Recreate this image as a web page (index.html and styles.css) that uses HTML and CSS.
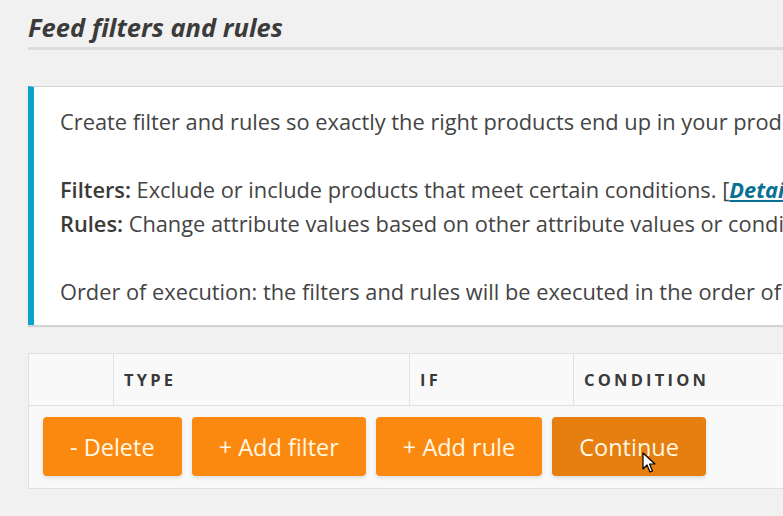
FILE: index.html
```html
<!DOCTYPE html>
<html>
<head>
<meta charset="utf-8">
<link rel="stylesheet" href="styles.css">
</head>
<body>
<div class="page">
  <h2 class="title">Feed filters and rules</h2>
  <div class="notice">
    <p>Create filter and rules so exactly the right products end up in your product feed. These filters and rules are only eligible for the current feed.</p>
    <p class="blank">&nbsp;</p>
    <p><strong>Filters:</strong> Exclude or include products that meet certain conditions. [<a href="#">Detailed information and filter examples</a>]</p>
    <p><strong>Rules:</strong> Change attribute values based on other attribute values or conditions. [<a href="#">Detailed information and rule examples</a>]</p>
    <p class="blank">&nbsp;</p>
    <p>Order of execution: the filters and rules will be executed in the order of creation.</p>
  </div>
  <div class="table">
    <div class="thead">
      <div class="th c0"></div>
      <div class="th c1">TYPE</div>
      <div class="th c2">IF</div>
      <div class="th c3">CONDITION</div>
      <div class="th c4">VALUE</div>
    </div>
    <div class="actions">
      <button class="btn">- Delete</button>
      <button class="btn">+ Add filter</button>
      <button class="btn">+ Add rule</button>
      <button class="btn hover">Continue
        <svg class="cursor" width="14" height="22" viewBox="0 0 14 22"><path d="M1 1 L1 17 L5 13 L8 20 L10.5 19 L7.5 12 L13 12 Z" fill="#fff" stroke="#000" stroke-width="1.2" stroke-linejoin="round"/></svg>
      </button>
    </div>
  </div>
</div>
</body>
</html>
```

FILE: styles.css
```css
html, body {
  margin: 0;
  padding: 0;
  background: #f1f1f1;
  overflow: hidden;
}
body {
  width: 783px;
  height: 516px;
}
.page {
  width: 1400px;
  padding-left: 28px;
  padding-top: 9px;
  font-family: "Open Sans", "Noto Sans", sans-serif;
  color: #444;
}
.title {
  margin: 0;
  font-family: "Open Sans", sans-serif;
  font-style: italic;
  font-weight: 700;
  font-size: 25.5px;
  line-height: 36px;
  color: #3b3b3b;
  border-bottom: 3px solid #dcdcdc;
  padding-bottom: 2px;
}
.notice {
  margin-top: 36px;
  background: #fff;
  border-top: 1px solid #d4d4d4;
  border-left: 6px solid #0aa2c9;
  box-shadow: 0 2px 1px rgba(0,0,0,0.12);
  padding: 18px 0 16px 26px;
  font-size: 21.8px;
  line-height: 34px;
  color: #444;
}
.notice p {
  margin: 0;
  white-space: nowrap;
}
.notice strong {
  font-weight: 600;
  color: #3a3a3a;
}
.notice a {
  color: #0a6f95;
  font-weight: 700;
  font-style: italic;
  text-decoration: underline;
}
.table {
  margin-top: 28px;
  background: #f9f9f9;
  border: 1px solid #e1e1e1;
}
.thead {
  display: flex;
  height: 51px;
  border-bottom: 1px solid #e1e1e1;
}
.th {
  display: flex;
  align-items: center;
  padding-left: 10px;
  font-size: 16.5px;
  font-weight: 700;
  letter-spacing: 3.2px;
  color: #3a3a3a;
  border-right: 1px solid #e1e1e1;
}
.c0 { width: 74px; }
.c1 { width: 285px; }
.c2 { width: 153px; }
.c3 { width: 250px; }
.c4 { border-right: none; }
.actions {
  display: flex;
  gap: 10px;
  padding: 11px 14px 12px;
}
.btn {
  position: relative;
  height: 59px;
  border: none;
  border-radius: 4px;
  background: #fc890f;
  color: #fff8e4;
  font-family: "Open Sans", sans-serif;
  font-size: 23.5px;
  padding: 0 27px;
  box-shadow: 0 2px 4px rgba(0,0,0,0.12);
}
.btn.hover {
  background: #e67f10;
}
.cursor {
  position: absolute;
  left: 90px;
  top: 35px;
}
```
